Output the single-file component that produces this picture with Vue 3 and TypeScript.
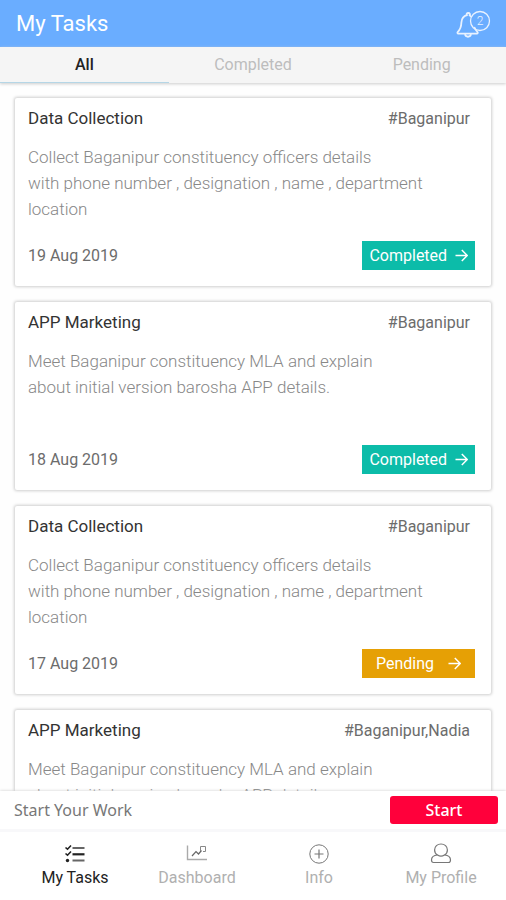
<script setup lang="ts">
import { ref, computed } from 'vue'

type Status = 'Completed' | 'Pending'
type Tab = 'All' | Status

interface Task {
  id: number
  title: string
  tag: string
  lines: string[]
  date?: string
  status?: Status
}

const collectLines = [
  'Collect Baganipur constituency officers details',
  'with phone number , designation , name , department',
  'location',
]
const marketingLines = [
  'Meet Baganipur constituency MLA and explain',
  'about initial version barosha APP details.',
]

const tasks: Task[] = [
  { id: 1, title: 'Data Collection', tag: '#Baganipur', lines: collectLines, date: '19 Aug 2019', status: 'Completed' },
  { id: 2, title: 'APP Marketing', tag: '#Baganipur', lines: marketingLines, date: '18 Aug 2019', status: 'Completed' },
  { id: 3, title: 'Data Collection', tag: '#Baganipur', lines: collectLines, date: '17 Aug 2019', status: 'Pending' },
  { id: 4, title: 'APP Marketing', tag: '#Baganipur,Nadia', lines: marketingLines },
]

const tabs: Tab[] = ['All', 'Completed', 'Pending']
const activeTab = ref<Tab>('All')
const visibleTasks = computed(() =>
  activeTab.value === 'All' ? tasks : tasks.filter((t) => t.status === activeTab.value),
)
</script>

<template>
  <div class="app">
    <header class="header">
      <h1>My Tasks</h1>
      <button class="bell" type="button" aria-label="Notifications">
        <svg width="36" height="32" viewBox="0 0 36 32" fill="none" stroke="currentColor">
          <path
            d="M15.500 8.200L14.500 7.200C15.600 6.600 14.800 5 13.300 5s-2.400 1.600-1.200 2.200C8.300 8.200 6.600 11 6.400 14.500c-.2 5-1 7-3.600 9.300-.7.7-.4 1.900.6 1.900h18.400c1 0 1.300-1.200.6-1.900-1.300-1.200-2.200-2.400-2.800-4"
            stroke-width="1.800" stroke-linecap="round" stroke-linejoin="round"
          />
          <path d="M10 26.200c.6 3.400 5.400 3.400 6 0" stroke-width="1.800" />
          <circle cx="25" cy="13" r="9.500" stroke-width="1.300" />
        </svg>
        <span class="count">2</span>
      </button>
    </header>

    <nav class="tabs" aria-label="Task filter">
      <button
        v-for="tab in tabs"
        :key="tab"
        type="button"
        :class="['tab', { active: tab === activeTab }]"
        @click="activeTab = tab"
      >
        {{ tab }}
      </button>
    </nav>

    <main class="list">
      <article v-for="task in visibleTasks" :key="task.id" class="card">
        <div class="row">
          <h2>{{ task.title }}</h2>
          <span class="tag">{{ task.tag }}</span>
        </div>
        <p class="details">
          <span v-for="line in task.lines" :key="line">{{ line }}</span>
        </p>
        <div v-if="task.status" class="row foot">
          <time>{{ task.date }}</time>
          <button type="button" :class="['status', task.status.toLowerCase()]">
            <span>{{ task.status }}</span>
            <svg width="13" height="13" viewBox="0 0 13 13" fill="none" stroke="currentColor" stroke-width="1.500">
              <path d="M0.500 6.500H12M6.800 1l5.500 5.500L6.800 12" />
            </svg>
          </button>
        </div>
      </article>
    </main>

    <footer class="footer">
      <div class="work">
        <span>Start Your Work</span>
        <button type="button" class="start">Start</button>
      </div>
      <nav class="bottom" aria-label="Main">
        <a href="#tasks" class="current">
          <svg width="22" height="22" viewBox="0 0 22 22" fill="none" stroke="currentColor">
            <path d="M1.500 4.500l2 1.700L7 2.500M1.500 10.500l2 1.700L7 8.500" stroke-width="1.600" />
            <circle cx="3.500" cy="17.500" r="1.700" fill="currentColor" stroke="none" />
            <path d="M8.500 5H20.500M8.500 17.500H20.500" stroke="#666" stroke-width="2.200" />
            <path d="M8.500 11.300H20.500" stroke-width="2.200" />
          </svg>
          <span>My Tasks</span>
        </a>
        <a href="#dashboard">
          <svg width="22" height="22" viewBox="0 0 22 22" fill="none" stroke="currentColor">
            <path d="M1.500 2.500V16.500H21" stroke="#aaa" stroke-width="1.400" />
            <path d="M6 13l4-4.500 2.500 2.500 3-3.500" stroke="#666" stroke-width="1.200" />
            <path d="M14.500 8V3.500h5V8.500h-2.500" stroke="#888" />
          </svg>
          <span>Dashboard</span>
        </a>
        <a href="#info">
          <svg width="22" height="22" viewBox="0 0 22 22" fill="none" stroke="#777">
            <circle cx="11" cy="11" r="9.200" />
            <path d="M11 6.500v9M6.500 11h9" stroke-width="1.200" />
          </svg>
          <span>Info</span>
        </a>
        <a href="#profile">
          <svg width="22" height="22" viewBox="0 0 22 22" fill="none" stroke="#777" stroke-width="1.200">
            <path d="M7.500 12C5.500 10.800 4.600 8.800 4.600 6.900 4.600 3.400 7.400 1 11 1s6.400 2.400 6.400 5.900c0 1.900-.9 3.900-2.900 5.100 3.800.3 6 2 6 5 0 1.700-.7 2.500-2 2.500h-15c-1.300 0-2-.8-2-2.500 0-3 2.200-4.700 6-5z" stroke-linejoin="round" />
            <path d="M7.500 12c2 1.300 5 1.300 7 0" />
          </svg>
          <span>My Profile</span>
        </a>
      </nav>
    </footer>
  </div>
</template>

<style>
body {
  background: #fff;
}
</style>

<style scoped>
.app {
  display: flex;
  flex-direction: column;
  height: 100vh;
  overflow: hidden;
  background: #fefefe;
  font-family: Roboto, "Liberation Sans", sans-serif;
  font-size: 16px;
}
button {
  border: 0;
  padding: 0;
  background: none;
  font: inherit;
  color: inherit;
  cursor: pointer;
}
h1,
h2,
p {
  margin: 0;
  font-weight: 400;
}
.header {
  display: flex;
  flex: none;
  align-items: center;
  justify-content: space-between;
  height: 47px;
  padding: 0 15px 0 16px;
  background: #6aadff;
  color: #fff;
}
h1 {
  font-size: 22px;
}
.bell {
  position: relative;
  height: 32px;
  color: #e9f2ff;
}
.bell svg {
  display: block;
}
.count {
  position: absolute;
  top: 2px;
  right: 1px;
  width: 20px;
  font-size: 12px;
  line-height: 22px;
  font-weight: 300;
}
.tabs {
  display: grid;
  flex: none;
  grid-template-columns: repeat(3, 1fr);
  height: 36px;
  background: #f5f5f5;
  box-shadow: 0 1px 3px #ccc;
}
.tab {
  border-bottom: 1px solid transparent;
  color: #bdbdbd;
}
.tab.active {
  border-color: #b5d6e6;
  color: #222;
  font-weight: 500;
}
.list {
  display: flex;
  flex: 1;
  flex-direction: column;
  gap: 16px;
  min-height: 0;
  padding: 15px;
  overflow-y: auto;
  scrollbar-width: none;
}
.card {
  display: flex;
  flex: none;
  flex-direction: column;
  min-height: 188px;
  box-sizing: border-box;
  padding: 8px 16px 16px 13px;
  background: #fff;
  border-radius: 2px;
  box-shadow: 0 0 3px 1px #cecece;
}
.row {
  display: flex;
  align-items: center;
  justify-content: space-between;
}
h2 {
  font-size: 17px;
  line-height: 24px;
  color: #333;
}
.tag {
  padding-right: 5px;
  color: #6c6c6c;
}
.details {
  padding-top: 14px;
  font-size: 17px;
  font-weight: 300;
  line-height: 26px;
  color: #888;
}
.details span {
  display: block;
}
.foot {
  margin-top: auto;
}
time {
  color: #6c6c6c;
}
.status {
  display: flex;
  align-items: center;
  justify-content: space-evenly;
  width: 113px;
  height: 29px;
  color: #fff;
}
.completed {
  background: #0cbca9;
}
.pending {
  background: #e6a005;
}
.footer {
  position: relative;
  flex: none;
  background: #fff;
  box-shadow: 0 0 3px #ccc;
}
.work {
  display: flex;
  align-items: center;
  justify-content: space-between;
  height: 38px;
  padding: 0 8px 0 14px;
  border-bottom: 3px solid #f8f8fa;
  color: #777;
  font-family: "Noto Sans", "Open Sans", sans-serif;
}
.start {
  width: 108px;
  height: 28px;
  border-radius: 3px;
  background: #ff003b;
  color: #fff;
  font-weight: 500;
}
.bottom {
  display: grid;
  grid-template-columns: repeat(4, 1fr);
  padding: 11px 4px 12px 14px;
}
.bottom a {
  display: flex;
  flex-direction: column;
  align-items: center;
  gap: 3px;
  color: #b0b0b0;
  font-size: 16px;
  line-height: 20px;
  text-decoration: none;
}
.bottom .current {
  color: #222;
}
</style>
